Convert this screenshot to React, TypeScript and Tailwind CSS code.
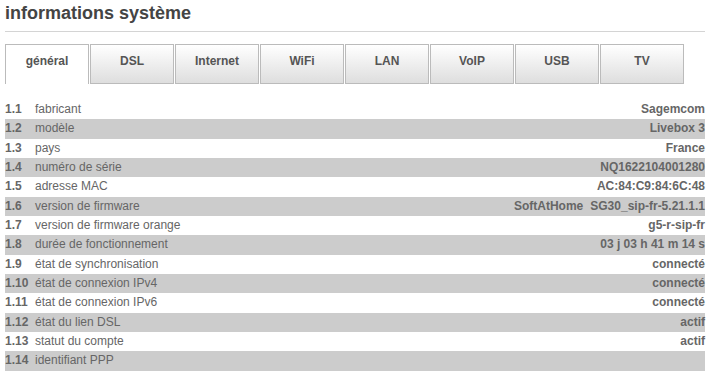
const tabs = ['général', 'DSL', 'Internet', 'WiFi', 'LAN', 'VoIP', 'USB', 'TV'];

const rows: { num: string; label: string; value: string[] }[] = [
  { num: '1.1', label: 'fabricant', value: ['Sagemcom'] },
  { num: '1.2', label: 'modèle', value: ['Livebox 3'] },
  { num: '1.3', label: 'pays', value: ['France'] },
  { num: '1.4', label: 'numéro de série', value: ['NQ1622104001280'] },
  { num: '1.5', label: 'adresse MAC', value: ['AC:84:C9:84:6C:48'] },
  { num: '1.6', label: 'version de firmware', value: ['SoftAtHome', 'SG30_sip-fr-5.21.1.1'] },
  { num: '1.7', label: 'version de firmware orange', value: ['g5-r-sip-fr'] },
  { num: '1.8', label: 'durée de fonctionnement', value: ['03 j 03 h 41 m 14 s'] },
  { num: '1.9', label: 'état de synchronisation', value: ['connecté'] },
  { num: '1.10', label: 'état de connexion IPv4', value: ['connecté'] },
  { num: '1.11', label: 'état de connexion IPv6', value: ['connecté'] },
  { num: '1.12', label: 'état du lien DSL', value: ['actif'] },
  { num: '1.13', label: 'statut du compte', value: ['actif'] },
  { num: '1.14', label: 'identifiant PPP', value: [] },
];

export default function App() {
  return (
    <div className="h-[384px] w-[714px] overflow-hidden bg-white font-['Liberation_Sans',Arial,sans-serif] text-[#666]">
      <div className="ml-[5px] w-[700px]">
        <h1 className="h-[32px] border-b border-[#d4d4d4] pt-px text-[18px] leading-[24px] font-bold text-[#444]">
          informations système
        </h1>

        <div className="mt-[12px] flex gap-px">
          {tabs.map((t, i) =>
            i === 0 ? (
              <div
                key={t}
                className="h-[40px] w-[84px] border border-b-0 border-[#bbb] bg-white pt-[7px] text-center text-[12px] font-bold text-[#555]"
              >
                {t}
              </div>
            ) : (
              <div
                key={t}
                className="h-[40px] w-[84px] border border-[#bbb] bg-gradient-to-b from-white to-[#dedede] pt-[7px] text-center text-[12px] font-bold text-[#555]"
              >
                {t}
              </div>
            )
          )}
        </div>

        <div className="mt-[16px]">
          {rows.map((r, i) => (
            <div
              key={r.num}
              className={`flex h-[19.33px] items-center text-[12px] leading-[19.33px] ${i % 2 === 1 ? 'bg-[#cccccc]' : ''}`}
            >
              <span className="w-[30px] shrink-0 font-bold">{r.num}</span>
              <span className="flex-1">{r.label}</span>
              <span className="flex gap-[7px] font-bold">
                {r.value.map((v) => (
                  <span key={v}>{v}</span>
                ))}
              </span>
            </div>
          ))}
        </div>
      </div>
    </div>
  );
}
